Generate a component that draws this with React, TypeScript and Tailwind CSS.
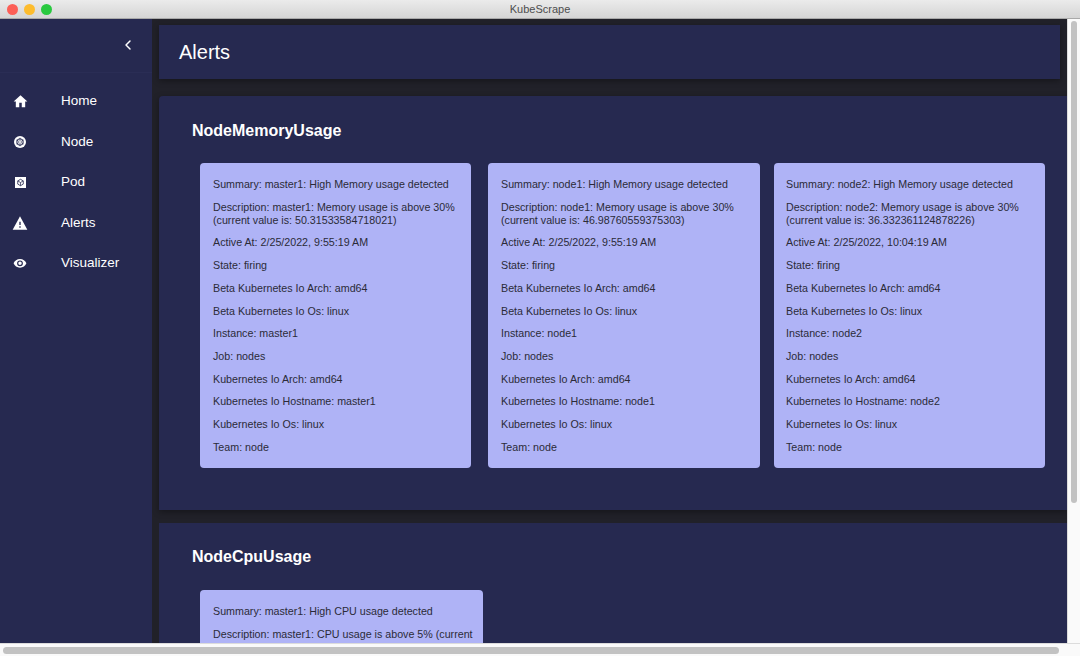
import { ChevronLeft } from "lucide-react";
import type { ReactNode } from "react";

const HomeIcon = () => (
  <svg viewBox="0 0 24 24" className="w-[15px] h-[15px]" fill="currentColor">
    <path d="M10 21v-7h4v7h5.5v-9H23L12 2 1 12h3.5v9z" />
  </svg>
);

// kubernetes style wheel inside a filled circle
const NodeIcon = () => (
  <svg viewBox="0 0 24 24" className="w-[12px] h-[12px]">
    <circle cx="12" cy="12" r="12" fill="currentColor" />
    <circle cx="12" cy="12" r="6.5" fill="none" stroke="#262950" strokeWidth="2" />
    <path d="M12 3.500v17M4.500 8l15 8M19.500 8l-15 8" stroke="#262950" strokeWidth="1.4" />
    <circle cx="12" cy="12" r="2" fill="currentColor" />
  </svg>
);

const PodIcon = () => (
  <svg viewBox="0 0 24 24" className="w-[11px] h-[11px]">
    <rect width="24" height="24" fill="currentColor" />
    <path d="M12 5l6 3.500v7L12 19l-6-3.500v-7z" fill="none" stroke="#262950" strokeWidth="1.8" />
    <path d="M6 8.500l6 3.500 6-3.500M12 12v7" fill="none" stroke="#262950" strokeWidth="1.6" />
  </svg>
);

const AlertIcon = () => (
  <svg viewBox="0 0 24 24" className="w-[16px] h-[16px]" fill="currentColor">
    <path d="M1 22h22L12 2 1 22zm12-3h-2v-2h2v2zm0-4h-2v-5h2v5z" />
  </svg>
);

const EyeIcon = () => (
  <svg viewBox="0 0 24 24" className="w-[14px] h-[14px]" fill="currentColor">
    <path d="M12 5C7 5 2.700 8.100 1 12.500 2.700 16.900 7 20 12 20s9.300-3.100 11-7.500C21.300 8.100 17 5 12 5zm0 12.500a5 5 0 1 1 0-10 5 5 0 0 1 0 10zm0-8a3 3 0 1 0 0 6 3 3 0 0 0 0-6z" />
  </svg>
);

const navItems: { label: string; icon: ReactNode }[] = [
  { label: "Home", icon: <HomeIcon /> },
  { label: "Node", icon: <NodeIcon /> },
  { label: "Pod", icon: <PodIcon /> },
  { label: "Alerts", icon: <AlertIcon /> },
  { label: "Visualizer", icon: <EyeIcon /> },
];

function memoryLines(name: string, value: string, time: string) {
  return [
    `Summary: ${name}: High Memory usage detected`,
    `Description: ${name}: Memory usage is above 30% (current value is: ${value})`,
    `Active At: 2/25/2022, ${time}`,
    "State: firing",
    "Beta Kubernetes Io Arch: amd64",
    "Beta Kubernetes Io Os: linux",
    `Instance: ${name}`,
    "Job: nodes",
    "Kubernetes Io Arch: amd64",
    `Kubernetes Io Hostname: ${name}`,
    "Kubernetes Io Os: linux",
    "Team: node",
  ];
}

const cpuLines = [
  "Summary: master1: High CPU usage detected",
  "Description: master1: CPU usage is above 5% (current value is: 8.48333541378492)",
  "Active At: 2/25/2022, 9:55:19 AM",
];

function AlertCard({ lines, className }: { lines: string[]; className: string }) {
  return (
    <div className={`shrink-0 rounded-[4px] bg-[#afb3f6] pr-[10px] pt-[15px] pb-[15px] text-[10.7px] leading-[13px] text-[#2b2b38] ${className}`}>
      {lines.map((line) => (
        <p key={line} className="mb-[9.72px] last:mb-0">
          {line}
        </p>
      ))}
    </div>
  );
}

export default function App() {
  return (
    <div className="flex h-[656px] w-[1080px] flex-col overflow-hidden bg-white font-['Liberation_Sans',Arial,sans-serif]">
      {/* Title bar */}
      <div className="relative flex h-[19px] shrink-0 items-center justify-center border-b border-[#a9a9a9] bg-gradient-to-b from-[#ebebeb] to-[#d5d5d5] text-[11px] text-[#4d4d4d]">
        <div className="absolute left-[7px] top-[4px] flex gap-[6.500px]">
          <span className="h-[10.500px] w-[10.500px] rounded-full bg-[#fc5f57]" />
          <span className="h-[10.500px] w-[10.500px] rounded-full bg-[#fdbc2e]" />
          <span className="h-[10.500px] w-[10.500px] rounded-full bg-[#29c93f]" />
        </div>
        KubeScrape
      </div>

      <div className="flex min-h-0 flex-1">
        <div className="flex min-w-0 flex-1 bg-[#212129]">
          {/* Sidebar */}
          <aside className="w-[152px] shrink-0 bg-[#262950] text-white">
            <div className="flex h-[54px] items-center justify-end border-b border-[#2a2d55] pr-[16px] pb-[2px]">
              <ChevronLeft size={16} strokeWidth={2.2} />
            </div>
            <nav className="pt-[8px]">
              {navItems.map((item) => (
                <div key={item.label} className="flex h-[40.5px] items-center text-[13.5px]">
                  <span className="flex w-[40px] justify-center">{item.icon}</span>
                  <span className="ml-[21px]">{item.label}</span>
                </div>
              ))}
            </nav>
          </aside>

          {/* Main */}
          <main className="min-w-0 flex-1 overflow-hidden pl-[7px] pt-[6px] text-white">
            <div className="flex h-[54px] w-[901px] items-center bg-[#262950] pl-[20px] text-[20px] shadow-[0_2px_6px_rgba(0,0,0,0.35)]">
              Alerts
            </div>

            <section className="mt-[17px] h-[414px] rounded-tl-[4px] bg-[#262950] pl-[33px] pt-[26px] shadow-[0_2px_6px_rgba(0,0,0,0.35)]">
              <h2 className="text-[16px] font-bold leading-[18px]">NodeMemoryUsage</h2>
              <div className="ml-[8px] mt-[23px] flex">
                <AlertCard className="h-[305px] w-[271px] pl-[13px]" lines={memoryLines("master1", "50.31533584718021", "9:55:19 AM")} />
                <AlertCard className="ml-[17px] h-[305px] w-[272px] pl-[13px]" lines={memoryLines("node1", "46.98760559375303", "9:55:19 AM")} />
                <AlertCard className="ml-[14px] h-[305px] w-[271px] pl-[12px]" lines={memoryLines("node2", "36.332361124878226", "10:04:19 AM")} />
              </div>
            </section>

            <section className="mt-[13px] h-[200px] bg-[#262950] pl-[33px] pt-[25px]">
              <h2 className="text-[16px] font-bold leading-[18px]">NodeCpuUsage</h2>
              <div className="ml-[8px] mt-[24px] flex">
                <AlertCard className="w-[283px] pl-[13px]" lines={cpuLines} />
              </div>
            </section>
          </main>
        </div>

        {/* Vertical scrollbar */}
        <div className="w-[13px] shrink-0 border-l border-[#dcdcdc] bg-[#fafafa] pl-[3px] pr-[3px] pt-[2px]">
          <div className="h-[482px] rounded-full bg-[#c2c2c2]" />
        </div>
      </div>

      {/* Horizontal scrollbar */}
      <div className="h-[13px] shrink-0 border-t border-[#dcdcdc] bg-[#fafafa] py-[3px] pl-[3px]">
        <div className="h-[7px] w-[1056px] rounded-full bg-[#c2c2c2]" />
      </div>
    </div>
  );
}
